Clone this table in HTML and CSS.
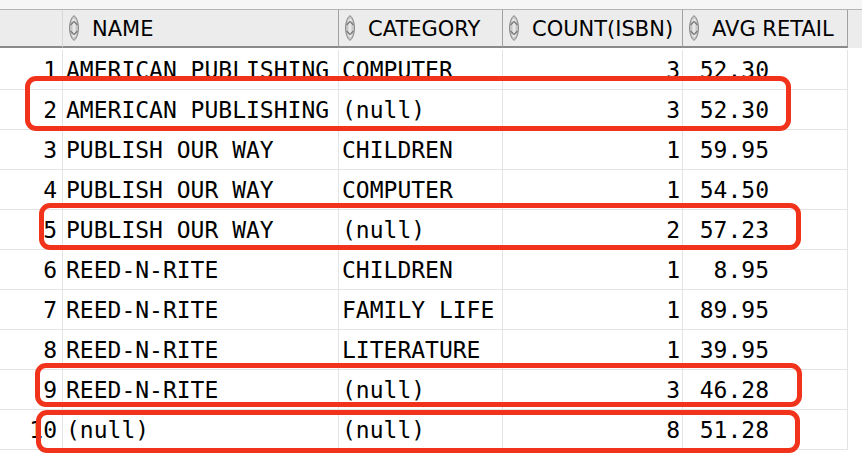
FILE: index.html
```html
<!DOCTYPE html>
<html>
<head>
<meta charset="utf-8">
<link rel="stylesheet" href="styles.css">
</head>
<body>
<div class="top"></div>
<div class="grid">
  <div class="hcell hnum"></div>
  <div class="hcell"><svg class="sort" viewBox="0 0 14 26" width="14" height="26"><path d="M7 0.5 C13 5 13 21 7 25.5 C1 21 1 5 7 0.5 Z" fill="#c6c6c6" stroke="#8a8a8a"/><path d="M7 4 L7 22" stroke="#e8e8e8" stroke-width="3"/><path d="M3.5 10 L7 6.5 L10.5 10 M3.5 16 L7 19.5 L10.5 16" fill="none" stroke="#777" stroke-width="1.2"/></svg><span>NAME</span></div>
  <div class="hcell"><svg class="sort" viewBox="0 0 14 26" width="14" height="26"><path d="M7 0.5 C13 5 13 21 7 25.5 C1 21 1 5 7 0.5 Z" fill="#c6c6c6" stroke="#8a8a8a"/><path d="M7 4 L7 22" stroke="#e8e8e8" stroke-width="3"/><path d="M3.5 10 L7 6.5 L10.5 10 M3.5 16 L7 19.5 L10.5 16" fill="none" stroke="#777" stroke-width="1.2"/></svg><span>CATEGORY</span></div>
  <div class="hcell"><svg class="sort" viewBox="0 0 14 26" width="14" height="26"><path d="M7 0.5 C13 5 13 21 7 25.5 C1 21 1 5 7 0.5 Z" fill="#c6c6c6" stroke="#8a8a8a"/><path d="M7 4 L7 22" stroke="#e8e8e8" stroke-width="3"/><path d="M3.5 10 L7 6.5 L10.5 10 M3.5 16 L7 19.5 L10.5 16" fill="none" stroke="#777" stroke-width="1.2"/></svg><span>COUNT(ISBN)</span></div>
  <div class="hcell"><svg class="sort" viewBox="0 0 14 26" width="14" height="26"><path d="M7 0.5 C13 5 13 21 7 25.5 C1 21 1 5 7 0.5 Z" fill="#c6c6c6" stroke="#8a8a8a"/><path d="M7 4 L7 22" stroke="#e8e8e8" stroke-width="3"/><path d="M3.5 10 L7 6.5 L10.5 10 M3.5 16 L7 19.5 L10.5 16" fill="none" stroke="#777" stroke-width="1.2"/></svg><span>AVG RETAIL</span></div>
  <div class="hfill"></div>

  <div class="c num">1</div><div class="c">AMERICAN PUBLISHING</div><div class="c">COMPUTER</div><div class="c r">3</div><div class="c avg">52.30</div><div class="f"></div>
  <div class="c num">2</div><div class="c">AMERICAN PUBLISHING</div><div class="c">(null)</div><div class="c r">3</div><div class="c avg">52.30</div><div class="f"></div>
  <div class="c num">3</div><div class="c">PUBLISH OUR WAY</div><div class="c">CHILDREN</div><div class="c r">1</div><div class="c avg">59.95</div><div class="f"></div>
  <div class="c num">4</div><div class="c">PUBLISH OUR WAY</div><div class="c">COMPUTER</div><div class="c r">1</div><div class="c avg">54.50</div><div class="f"></div>
  <div class="c num">5</div><div class="c">PUBLISH OUR WAY</div><div class="c">(null)</div><div class="c r">2</div><div class="c avg">57.23</div><div class="f"></div>
  <div class="c num">6</div><div class="c">REED-N-RITE</div><div class="c">CHILDREN</div><div class="c r">1</div><div class="c avg">8.95</div><div class="f"></div>
  <div class="c num">7</div><div class="c">REED-N-RITE</div><div class="c">FAMILY LIFE</div><div class="c r">1</div><div class="c avg">89.95</div><div class="f"></div>
  <div class="c num">8</div><div class="c">REED-N-RITE</div><div class="c">LITERATURE</div><div class="c r">1</div><div class="c avg">39.95</div><div class="f"></div>
  <div class="c num">9</div><div class="c">REED-N-RITE</div><div class="c">(null)</div><div class="c r">3</div><div class="c avg">46.28</div><div class="f"></div>
  <div class="c num">10</div><div class="c">(null)</div><div class="c">(null)</div><div class="c r">8</div><div class="c avg">51.28</div><div class="f"></div>
</div>
<div class="mark m1"></div>
<div class="mark m2"></div>
<div class="mark m3"></div>
<div class="mark m4"></div>
</body>
</html>
```
FILE: styles.css
```css
html, body {
  margin: 0;
  padding: 0;
  background: #ffffff;
}
body {
  width: 862px;
  height: 472px;
  overflow: hidden;
  position: relative;
}
.top {
  height: 9px;
  background: #f6f6f6;
  border-bottom: 1px solid #b4b4b4;
}
.grid {
  display: grid;
  grid-template-columns: 63px 276px 164px 180px 165px 1fr;
  grid-auto-rows: 40px;
  align-content: start;
  font-family: "DejaVu Sans Mono", Menlo, monospace;
  font-size: 23px;
  color: #000;
}
.grid > .hcell,
.grid > .hfill {
  height: 38px;
  box-sizing: border-box;
  background: #ececec;
  align-self: start;
}
.hcell {
  display: flex;
  align-items: center;
  padding-left: 4px;
  padding-top: 2px;
  border-right: 1px solid #a0a0a0;
  border-bottom: 2px solid #8a8a8a;
  font-family: "DejaVu Sans", "Lucida Grande", sans-serif;
  font-size: 21px;
  color: #000;
}
.hcell.hnum {
  border-right: 1px solid #d8d8d8;
}
.hcell .sort {
  flex: none;
  margin-right: 11px;
  margin-top: -2px;
}
.hfill {
  background: #f0f0f0;
}
.c {
  display: flex;
  align-items: center;
  box-sizing: border-box;
  border-right: 1px solid #e4e4e4;
  border-bottom: 1px solid #e4e4e4;
  padding: 0 3px;
  white-space: pre;
  overflow: hidden;
}
.c.num {
  justify-content: flex-end;
  padding-right: 5px;
}
.c.r {
  justify-content: flex-end;
  padding-right: 2px;
}
.c.avg {
  justify-content: flex-end;
  padding-right: 78px;
}
.f {
  border-bottom: none;
}
.mark {
  position: absolute;
  border: 5px solid #f2331b;
  border-radius: 11px;
  box-sizing: border-box;
}
.m1 { left: 25px; top: 76px; width: 766px; height: 55px; }
.m2 { left: 39px; top: 203px; width: 762px; height: 47px; }
.m3 { left: 35px; top: 363px; width: 767px; height: 44px; }
.m4 { left: 36px; top: 410px; width: 764px; height: 43px; }
```
